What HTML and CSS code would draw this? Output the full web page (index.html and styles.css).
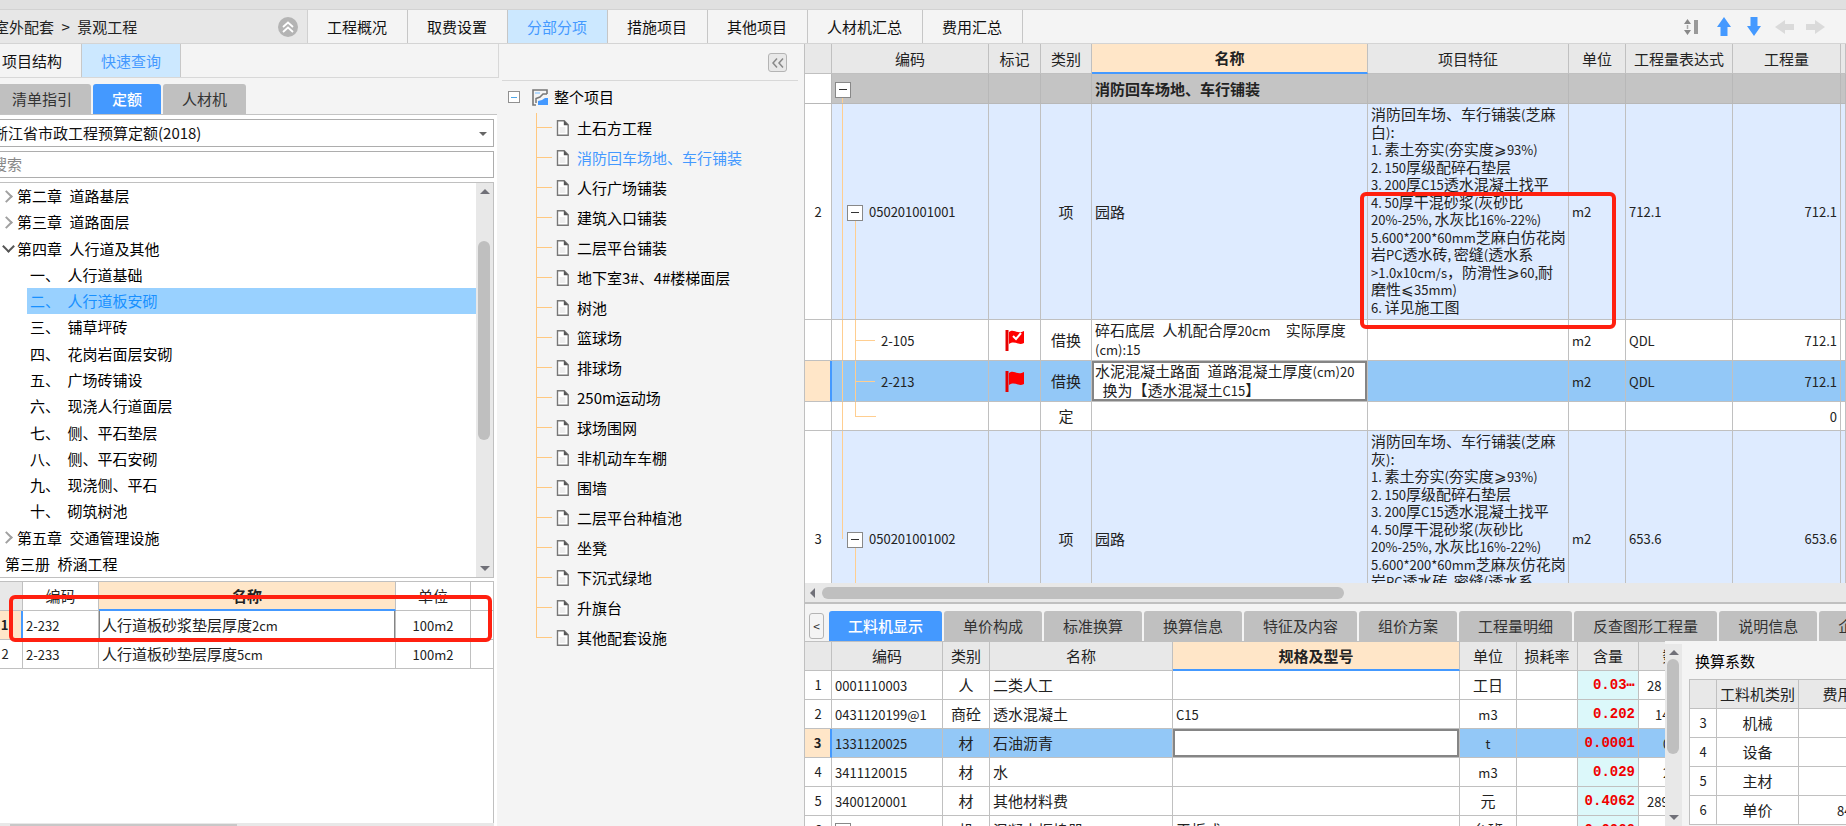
FILE: index.html
```html
<!DOCTYPE html>
<html lang="zh-CN">
<head>
<meta charset="utf-8">
<title>工程计价</title>
<link rel="stylesheet" href="styles.css">
</head>
<body>
<svg class="defs" aria-hidden="true">
  <symbol id="doc" viewBox="0 0 13 16"><path d="M1.5 .8h6.7l4 4v10.4H1.500z" fill="#fff" stroke="#777" stroke-width="1.4"/><path d="M7.800 0.500v4.800h4.700z" fill="#555"/><path d="M3.500 8h6M3.500 10h6M3.500 12h6" stroke="#ddd"/></symbol>
</svg>
<div class="app">
  <div class="strip"></div>
  <header class="topbar">
    <div class="crumb"><span>室外配套&ensp;&gt;&ensp;景观工程</span>
      <button class="round" aria-label="收起"><svg viewBox="0 0 20 20" width="20" height="20"><circle cx="10" cy="10" r="10" fill="#b4b4b4"/><path d="M5 10l5-4.500 5 4.500M5 15l5-4.500 5 4.500" fill="none" stroke="#fff" stroke-width="1.800"/></svg></button>
    </div>
    <nav class="maintabs">
      <button>工程概况</button><button>取费设置</button><button class="on">分部分项</button><button>措施项目</button><button>其他项目</button><button>人材机汇总</button><button>费用汇总</button>
    </nav>
    <div class="tools">
      <button aria-label="行高"><svg viewBox="0 0 14 16" width="14" height="16"><path d="M0 5l3.500-5L7 5zM0 11l3.500 5L7 11z" fill="#888"/><path d="M3.500 6v4" stroke="#aaa" stroke-width="1.500"/><path d="M10 1h4v14h-4z" fill="#999"/></svg></button>
      <button aria-label="上移"><svg viewBox="0 0 14 19" width="14" height="19"><path d="M7 0l7 10h-3.500v9h-7v-9H0z" fill="#4499ff"/></svg></button>
      <button aria-label="下移"><svg viewBox="0 0 14 19" width="14" height="19"><path d="M7 19l7-10h-3.500V0h-7v9H0z" fill="#4499ff"/></svg></button>
      <button aria-label="左移"><svg viewBox="0 0 19 14" width="19" height="14"><path d="M0 7l10-7v4h9v6h-9v4z" fill="#dadada"/></svg></button>
      <button aria-label="右移"><svg viewBox="0 0 19 14" width="19" height="14"><path d="M19 7L9 0v4H0v6h9v4z" fill="#dadada"/></svg></button>
    </div>
  </header>
  <div class="body">
    <aside class="left">
      <nav class="subtabs"><button>项目结构</button><button class="on">快速查询</button></nav>
      <nav class="pills first"><button>清单指引</button><button class="on">定额</button><button>人材机</button></nav>
      <div class="query">
        <div class="combo"><select aria-label="定额库"><option>浙江省市政工程预算定额(2018)</option></select></div>
        <input class="search" type="text" placeholder="搜索" aria-label="搜索">
        <div class="treebox">
          <ul class="chapters">
            <li class="c closed">第二章&ensp;道路基层</li>
            <li class="c closed">第三章&ensp;道路面层</li>
            <li class="c open">第四章&ensp;人行道及其他</li>
            <li class="s">一、&ensp;人行道基础</li>
            <li class="s sel">二、&ensp;人行道板安砌</li>
            <li class="s">三、&ensp;铺草坪砖</li>
            <li class="s">四、&ensp;花岗岩面层安砌</li>
            <li class="s">五、&ensp;广场砖铺设</li>
            <li class="s">六、&ensp;现浇人行道面层</li>
            <li class="s">七、&ensp;侧、平石垫层</li>
            <li class="s">八、&ensp;侧、平石安砌</li>
            <li class="s">九、&ensp;现浇侧、平石</li>
            <li class="s">十、&ensp;砌筑树池</li>
            <li class="c closed">第五章&ensp;交通管理设施</li>
            <li class="v">第三册&ensp;桥涵工程</li>
          </ul>
          <div class="vbar"><i class="up"></i><b class="t1"></b><i class="down"></i></div>
        </div>
        <div class="quota">
          <table class="grid qt">
            <colgroup><col class="w35"><col class="w76"><col><col class="w75"><col class="w22"></colgroup>
            <tr><th class="corner"></th><th>编码</th><th class="cur">名称</th><th>单位</th><th></th></tr>
            <tr><td class="no act">1</td><td><span class="n">2-232</span></td><td class="edit side">人行道板砂浆垫层厚度<span class="n">2cm</span></td><td class="mid"><span class="n">100m2</span></td><td></td></tr>
            <tr><td class="no">2</td><td><span class="n">2-233</span></td><td>人行道板砂垫层厚度<span class="n">5cm</span></td><td class="mid"><span class="n">100m2</span></td><td></td></tr>
          </table>
          <div class="mark m1"></div>
        </div>
        <div class="hslim"><b></b></div>
      </div>
    </aside>
    <section class="middle">
      <div class="mhead"><button class="fold" aria-label="收起"><svg viewBox="0 0 12 10" width="12" height="10"><path d="M5 .5L1 5l4 4.500M11 .5L7 5l4 4.500" fill="none" stroke="#888" stroke-width="1.500"/></svg></button></div>
      <div class="root"><button class="ex" aria-label="折叠"></button><svg viewBox="0 0 16 17" width="16" height="17"><path d="M15 5V1H1v15h3" fill="none" stroke="#777" stroke-width="1.600"/><path d="M3 4h5" stroke="#9fd0ff" stroke-width="1.500"/><path d="M4 14V9.500l4-1.500 3-3h4" fill="none" stroke="#777" stroke-width="1.500"/><path d="M6 16v-4l4-1 3-2h3v7z" fill="#4499ff"/></svg><span>整个项目</span></div>
      <ul class="parts">
        <li><svg><use href="#doc"/></svg>土石方工程</li>
        <li class="sel"><svg><use href="#doc"/></svg>消防回车场地、车行铺装</li>
        <li><svg><use href="#doc"/></svg>人行广场铺装</li>
        <li><svg><use href="#doc"/></svg>建筑入口铺装</li>
        <li><svg><use href="#doc"/></svg>二层平台铺装</li>
        <li><svg><use href="#doc"/></svg>地下室3#、4#楼梯面层</li>
        <li><svg><use href="#doc"/></svg>树池</li>
        <li><svg><use href="#doc"/></svg>篮球场</li>
        <li><svg><use href="#doc"/></svg>排球场</li>
        <li><svg><use href="#doc"/></svg>250m运动场</li>
        <li><svg><use href="#doc"/></svg>球场围网</li>
        <li><svg><use href="#doc"/></svg>非机动车车棚</li>
        <li><svg><use href="#doc"/></svg>围墙</li>
        <li><svg><use href="#doc"/></svg>二层平台种植池</li>
        <li><svg><use href="#doc"/></svg>坐凳</li>
        <li><svg><use href="#doc"/></svg>下沉式绿地</li>
        <li><svg><use href="#doc"/></svg>升旗台</li>
        <li><svg><use href="#doc"/></svg>其他配套设施</li>
      </ul>
    </section>
    <main class="right">
      <div class="bill">
        <table class="grid main">
          <colgroup><col class="w27"><col class="w157"><col class="w52"><col class="w51"><col><col class="w201"><col class="w57"><col class="w107"><col class="w108"><col class="w5"></colgroup>
          <tr class="h30"><th></th><th>编码</th><th>标记</th><th>类别</th><th class="cur">名称</th><th>项目特征</th><th>单位</th><th>工程量表达式</th><th>工程量</th><th></th></tr>
          <tr class="h30 group"><td class="no"></td><td class="tr g"><button class="box" aria-label="折叠"></button></td><td></td><td></td><td>消防回车场地、车行铺装</td><td></td><td></td><td></td><td></td><td></td></tr>
          <tr class="h216 item"><td class="no">2</td><td class="tr a"><button class="box" aria-label="折叠"></button><span class="n">050201001001</span></td><td></td><td class="mid">项</td><td>园路</td>
            <td class="top"><div class="spec"><span>消防回车场、车行铺装<i>(</i>芝麻</span><span>白<i>)</i>:</span><span><i>1.&thinsp;</i>素土夯实<i>(</i>夯实度⩾<i>93%)</i></span><span><i>2.&thinsp;150</i>厚级配碎石垫层</span><span><i>3.&thinsp;200</i>厚<i>C15</i>透水混凝土找平</span><span><i>4.&thinsp;50</i>厚干混砂浆<i>(</i>灰砂比</span><span><i>20%-25%,&thinsp;</i>水灰比<i>16%-22%)</i></span><span><i>5.600*200*60mm</i>芝麻白仿花岗</span><span>岩<i>PC</i>透水砖<i>,&thinsp;</i>密缝<i>(</i>透水系</span><span><i>&gt;1.0x10cm/s</i>，防滑性⩾<i>60,</i>耐</span><span>磨性⩽<i>35mm)</i></span><span><i>6.&thinsp;</i>详见施工图</span></div></td>
            <td><span class="n">m2</span></td><td><span class="n">712.1</span></td><td class="num"><span class="n">712.1</span></td><td></td></tr>
          <tr class="h41"><td class="no"></td><td class="tr k"><span class="n">2-105</span></td><td class="mid"><svg class="flag" viewBox="0 0 20 22"><path d="M2 1v21" stroke="#e60000" stroke-width="3"/><path d="M4 3c5-4 8 3 15-1v12c-6 3-9-3-15 1z" fill="#f00"/><path d="M8 7l3 3 5-6" fill="none" stroke="#fff" stroke-width="2"/></svg></td><td class="mid">借换</td><td class="wrap">碎石底层&ensp;人机配合厚<span class="n">20cm</span>&emsp;实际厚度<br><span class="n">(cm):15</span></td><td></td><td><span class="n">m2</span></td><td><span class="n">QDL</span></td><td class="num"><span class="n">712.1</span></td><td></td></tr>
          <tr class="h41 sel"><td class="no act"></td><td class="tr k"><span class="n">2-213</span></td><td class="mid"><svg class="flag" viewBox="0 0 20 22"><path d="M2 1v21" stroke="#e60000" stroke-width="3"/><path d="M4 3c5-4 8 3 15-1v12c-6 3-9-3-15 1z" fill="#f00"/></svg></td><td class="mid">借换</td><td class="wrap edit">水泥混凝土路面&ensp;道路混凝土厚度<span class="n">(cm)20</span><br>&ensp;换为【透水混凝土<span class="n">C15</span>】</td><td></td><td><span class="n">m2</span></td><td><span class="n">QDL</span></td><td class="num"><span class="n">712.1</span></td><td></td></tr>
          <tr class="h29"><td class="no"></td><td class="tr k z"></td><td></td><td class="mid">定</td><td></td><td></td><td></td><td></td><td class="num"><span class="n">0</span></td><td></td></tr>
          <tr class="h216 item"><td class="no">3</td><td class="tr a z"><button class="box" aria-label="折叠"></button><span class="n">050201001002</span></td><td></td><td class="mid">项</td><td>园路</td>
            <td class="top"><div class="spec"><span>消防回车场、车行铺装<i>(</i>芝麻</span><span>灰<i>)</i>:</span><span><i>1.&thinsp;</i>素土夯实<i>(</i>夯实度⩾<i>93%)</i></span><span><i>2.&thinsp;150</i>厚级配碎石垫层</span><span><i>3.&thinsp;200</i>厚<i>C15</i>透水混凝土找平</span><span><i>4.&thinsp;50</i>厚干混砂浆<i>(</i>灰砂比</span><span><i>20%-25%,&thinsp;</i>水灰比<i>16%-22%)</i></span><span><i>5.600*200*60mm</i>芝麻灰仿花岗</span><span>岩<i>PC</i>透水砖<i>,&thinsp;</i>密缝<i>(</i>透水系</span></div></td>
            <td><span class="n">m2</span></td><td><span class="n">653.6</span></td><td class="num"><span class="n">653.6</span></td><td></td></tr>
        </table>
        <div class="mark m2"></div>
      </div>
      <div class="hbar"><i></i><b></b></div>
      <nav class="pills low"><button class="prev" aria-label="向左">&lt;</button><button class="on">工料机显示</button><button>单价构成</button><button>标准换算</button><button>换算信息</button><button>特征及内容</button><button>组价方案</button><button>工程量明细</button><button>反查图形工程量</button><button>说明信息</button><button>企业定额</button></nav>
      <div class="detail">
        <div class="labour">
          <table class="grid lt">
            <colgroup><col class="w27"><col class="w111"><col class="w47"><col class="w183"><col><col class="w57"><col class="w61"><col class="w61"><col class="w78"></colgroup>
            <tr><th></th><th>编码</th><th>类别</th><th>名称</th><th class="cur">规格及型号</th><th>单位</th><th>损耗率</th><th>含量</th><th>数量</th></tr>
            <tr><td class="no">1</td><td><span class="n">0001110003</span></td><td class="mid">人</td><td>二类人工</td><td></td><td class="mid">工日</td><td></td><td class="qty">0.03⋯</td><td class="far"><span class="n">28</span></td></tr>
            <tr><td class="no">2</td><td><span class="n">0431120199@1</span></td><td class="mid">商砼</td><td>透水混凝土</td><td><span class="n">C15</span></td><td class="mid"><span class="n">m3</span></td><td></td><td class="qty">0.202</td><td class="far p2"><span class="n">14</span></td></tr>
            <tr class="sel"><td class="no act">3</td><td><span class="n">1331120025</span></td><td class="mid">材</td><td>石油沥青</td><td class="edit"></td><td class="mid"><span class="n">t</span></td><td></td><td class="qty">0.0001</td><td class="far p3"><span class="n">0</span></td></tr>
            <tr><td class="no">4</td><td><span class="n">3411120015</span></td><td class="mid">材</td><td>水</td><td></td><td class="mid"><span class="n">m3</span></td><td></td><td class="qty">0.029</td><td class="far p3"><span class="n">2</span></td></tr>
            <tr><td class="no">5</td><td><span class="n">3400120001</span></td><td class="mid">材</td><td>其他材料费</td><td></td><td class="mid">元</td><td></td><td class="qty">0.4062</td><td class="far"><span class="n">289</span></td></tr>
            <tr><td class="no">6</td><td><button class="box plus" aria-label="展开"></button> <span class="n">9975964</span></td><td class="mid">机</td><td>混凝土振捣器</td><td>平板式</td><td class="mid">台班</td><td></td><td class="qty">0.0066</td><td></td></tr>
          </table>
        </div>
        <div class="vbar lower"><i class="up"></i><b class="t2"></b><i class="down"></i></div>
        <div class="coef">
          <h2>换算系数</h2>
          <table class="grid ct">
            <colgroup><col class="w27"><col class="w82"><col class="w108"></colgroup>
            <tr><th></th><th>工料机类别</th><th>费用系数</th></tr>
            <tr><td class="no">3</td><td class="mid">机械</td><td></td></tr>
            <tr><td class="no">4</td><td class="mid">设备</td><td></td></tr>
            <tr><td class="no">5</td><td class="mid">主材</td><td></td></tr>
            <tr><td class="no">6</td><td class="mid">单价</td><td class="fee"><span class="n">84</span></td></tr>
          </table>
        </div>
      </div>
    </main>
  </div>
</div>
</body>
</html>
```
FILE: styles.css
```css
* { box-sizing: border-box; }
html, body { height: 100%; }
body { margin: 0; overflow: hidden; background: #f4f4f4; color: #222; font: 15px/18px "Noto Sans CJK SC", "Noto Sans", sans-serif; }
button, input, select { font: inherit; color: inherit; margin: 0; padding: 0; border: 0; background: none; border-radius: 0; }
ul { list-style: none; margin: 0; padding: 0; }
.defs { display: none; }
.n, .spec i { font-size: 13px; font-style: normal; }
.app { display: flex; flex-direction: column; height: 100vh; }
.strip { flex: none; height: 10px; background: #e0e0e0; border-bottom: 1px solid #d2d2d2; }

/* top bar */
.topbar { flex: none; display: flex; height: 34px; border-bottom: 1px solid #d4d4d4; white-space: nowrap; }
.crumb { flex: none; width: 308px; display: flex; align-items: center; justify-content: space-between; padding-right: 9px; background: #e7e7e7; border-right: 1px solid #d0d0d0; }
.crumb span { margin-left: -6px; }
.round { height: 20px; width: 20px; display: flex; }
.maintabs { display: flex; }
.maintabs button { padding: 0 20px 0 19px; border-right: 1px solid #c6c6c6; color: #111; }
.maintabs .on { background: #cce8ff; color: #4499ff; }
.tools { margin-left: auto; display: flex; align-items: center; gap: 12px; padding-right: 21px; }
.tools button { display: flex; justify-content: center; min-width: 18px; }
.tools button:first-child { margin-right: 3px; }

.body { flex: 1; min-height: 0; display: flex; }
.left { flex: none; width: 499px; display: flex; flex-direction: column; overflow: hidden; }
.subtabs { flex: none; height: 34px; display: flex; border: 1px solid #d8d8d8; border-top: 0; border-left: 0; margin-left: -17px; color: #111; }
.subtabs button { padding: 0 19px; border-right: 1px solid #c8c8c8; }
.subtabs .on { background: #cce8ff; color: #4499ff; }
.pills { flex: none; display: flex; gap: 2px; height: 30px; white-space: nowrap; }
.pills button { padding: 0 19px; background: #c0c0c0; border-radius: 3px 3px 0 0; color: #333; }
.pills .on { background: #4499ff; color: #fff; font-weight: 500; }
.pills.first { margin: 6px 0 0 -7px; }
.query { flex: 1; min-height: 0; display: flex; flex-direction: column; margin-right: 2px; padding-right: 3px; background: #fff; border-top: 1px solid #c4c4c4; }
.combo { position: relative; flex: none; height: 28px; margin: 4px 0 4px -12px; border: 1px solid #adadad; }
.combo::after { content: ""; position: absolute; right: 6px; top: 12px; border: 4px solid transparent; border-top-color: #666; pointer-events: none; }
.combo select { width: 100%; height: 100%; appearance: none; padding-left: 4px; color: #111; }
.search { flex: none; height: 27px; margin-left: -12px; padding: 0 0 2px 3px; border: 1px solid #adadad; }
.search::placeholder { color: #888; opacity: 1; }
.treebox { flex: none; height: 396px; margin-top: 4px; display: flex; border: 1px solid #c0c0c0; border-left: 0; }
.chapters { flex: 1; display: grid; grid-auto-rows: 1fr; color: #000; }
.chapters li { position: relative; display: flex; align-items: center; }
.c { padding-left: 17px; }
.v { padding-left: 5px; }
.s { padding-left: 3px; margin-left: 27px; }
.chapters .sel { background: #99d1ff; color: #1890ff; }
.c::before { content: ""; position: absolute; left: 2px; top: 9px; width: 7px; height: 7px; border: solid #a0a0a0; border-width: 2px 2px 0 0; transform: rotate(45deg); }
.open::before { left: 4px; top: 6px; border-color: #555; transform: rotate(135deg); }
.vbar { flex: none; width: 17px; position: relative; background: #e8e8e8; }
.vbar i { position: absolute; left: 4px; border: 5px solid transparent; }
.vbar .up { top: 1px; border-bottom-color: #707078; }
.vbar .down { bottom: 1px; border-top-color: #707078; }
.vbar b { position: absolute; left: 2px; right: 3px; border-radius: 6px; background: #bfbfbf; }
.t1 { top: 58px; height: 199px; }
.t2 { top: 15px; height: 95px; }

/* grids */
.grid { table-layout: fixed; border-collapse: separate; border-spacing: 0; width: 100%; }
.grid th, .grid td { height: 29px; padding: 0 3px; border: solid #c0c0c0; border-width: 0 1px 1px 0; text-align: left; vertical-align: middle; white-space: nowrap; overflow: hidden; }
.grid td { background: #fff; }
.grid th { padding: 0; background: #e8e8e8; font-weight: 400; text-align: center; }
.grid th.cur { background: #ffe6c8; font-weight: 700; border-bottom: 2px solid #4499ff; }
.grid .mid { text-align: center; }
.grid .num { text-align: right; }
.grid .no { padding: 0; text-align: center; font-size: 13px; }
.grid .act { background: #ffe6c8; border-right: 2px solid #4499ff; font-weight: 700; }
.grid .sel td { background: #93c8f7; }
.grid .sel .act { background: #ffe6c8; }
.grid td.edit, .grid .sel td.edit { background: #fff; box-shadow: inset 0 0 0 2px #858585; }
.grid td.side { box-shadow: inset 1px 0 #858585, inset -1px 0 #858585; }
.grid .h30 th, .grid .h30 td { height: 30px; }
.grid .h41 td { height: 41px; }
.grid .h216 td { height: 216px; }
.w5 { width: 5px; } .w22 { width: 22px; } .w27 { width: 27px; } .w35 { width: 35px; } .w47 { width: 47px; }
.w51 { width: 51px; } .w52 { width: 52px; } .w57 { width: 57px; } .w61 { width: 61px; } .w75 { width: 75px; }
.w76 { width: 76px; } .w78 { width: 78px; } .w82 { width: 82px; } .w107 { width: 107px; } .w108 { width: 108px; }
.w111 { width: 111px; } .w157 { width: 157px; } .w183 { width: 183px; } .w201 { width: 201px; }

.quota { position: relative; flex: 1; min-height: 0; margin-top: 3px; border: 1px solid #c0c0c0; border-width: 1px 1px 0 0; }
.qt { margin-left: -12px; width: calc(100% + 12px); }
.qt th { background: #fff; }
.qt th.corner { background: #e8e8e8; }
.qt th:last-child, .qt td:last-child { border-right: 0; }
.mark { position: absolute; border: 4px solid #ff2010; border-radius: 6px; }
.m1 { left: 9px; right: 1px; top: 13px; height: 47px; }
.m2 { right: 230px; top: 148px; width: 256px; height: 137px; }
.hslim { flex: none; height: 3px; background: #e8e8e8; padding: 1px 0 0 10px; }
.hslim b { display: block; width: 227px; height: 2px; background: #c8c8c8; }

/* project tree */
.middle { flex: none; width: 305px; color: #000; }
.mhead { height: 37px; margin: 0 6px 0 3px; padding: 9px 11px 0 0; border-bottom: 1px solid #d8d8d8; display: flex; justify-content: flex-end; }
.fold { width: 19px; height: 19px; display: flex; align-items: center; justify-content: center; border: 1px solid #b4b4b4; border-radius: 3px; background: #e8e8e8; }
.root { height: 32px; display: flex; align-items: center; padding-left: 9px; }
.root svg { margin: 0 6px 0 12px; }
.ex { width: 12px; height: 12px; border: 1px solid #909090; background: linear-gradient(#4da6e8, #4da6e8) center / 6px 1px no-repeat #fff; }
.parts { margin-left: 37px; }
.parts li { position: relative; height: 30px; display: flex; align-items: center; gap: 8px; padding-left: 20px; }
.parts svg { width: 13px; height: 16px; }
.parts .sel { color: #4499ff; }
.parts li::before { content: ""; position: absolute; left: 0; top: 0; bottom: 0; border-left: 1px solid #ffc880; }
.parts li::after { content: ""; position: absolute; left: 0; top: 14px; width: 16px; border-top: 1px solid #ffc880; }
.parts li:last-child::before { bottom: 15px; }

/* bill of quantities */
.right { flex: 1; min-width: 0; display: flex; flex-direction: column; border-left: 1px solid #c0c0c0; }
.bill { position: relative; flex: 1; min-height: 0; overflow: hidden; background: #fff; }
.grid .group td { background: #c4c4c4; border-color: #b8b8b8; font-weight: 700; }
.grid .group .no { background: #fff; }
.grid .item td { background: #deebff; }
.grid .item .no { background: #fff; }
.grid td.top { vertical-align: top; padding-top: 1px; }
.grid td.wrap { line-height: 18px; }
.spec { display: grid; grid-template-rows: repeat(12, minmax(0, 1fr)); height: 210px; line-height: 17px; }
.spec i { line-height: 1; }
.flag { display: block; width: 20px; height: 22px; margin: auto; }
.box { width: 16px; height: 16px; border: 1px solid #888; background: linear-gradient(#333, #333) center / 8px 1px no-repeat #fff; vertical-align: middle; }
.plus { background: linear-gradient(#333, #333) center / 8px 1px no-repeat, linear-gradient(#333, #333) center / 1px 8px no-repeat #fff; }
.grid td.tr { position: relative; }
.tr::before, .tr::after { content: ""; position: absolute; top: 0; bottom: 0; left: 10px; width: 1px; background: #ffce90; }
.tr .box { position: relative; z-index: 1; }
.g::before { top: 22px; }
.g::after { display: none; }
.grid td.a { padding-left: 15px; }
.a .n { margin-left: 6px; }
.a::after { left: 23px; top: 50%; }
.a.z::before { bottom: 50%; }
.grid td.k { padding-left: 49px; }
.k::before { box-shadow: 13px 0 #ffce90; }
.k::after { left: 23px; top: 50%; bottom: auto; width: 20px; height: 1px; }
.k.z::before { box-shadow: none; }
.k.z::after { top: 0; height: 50%; background: none; border: solid #ffce90; border-width: 0 0 1px 1px; }

.hbar { flex: none; height: 21px; position: relative; background: #e8e8e8; border-bottom: 2px solid #c0c0c0; }
.hbar i { position: absolute; left: 0; top: 5px; border: 5px solid transparent; border-right-color: #707078; }
.hbar b { position: absolute; left: 17px; right: 502px; top: 4px; height: 12px; border-radius: 6px; background: #bfbfbf; }
.pills.low { margin-top: 7px; padding-left: 4px; overflow: hidden; }
.low button { flex: none; }
.low .prev { width: 15px; height: 26px; margin: 2px 3px 0 0; padding: 0; border: 1px solid #b4b4b4; border-radius: 3px; background: #f4f4f4; font-size: 12px; }
.detail { flex: none; height: 185px; display: flex; overflow: hidden; }
.labour { flex: 1; min-width: 0; overflow: hidden; border-top: 1px solid #c0c0c0; }
.lt { width: calc(100% + 52px); }
.grid td.qty { background: #dcf8fa; color: #f00000; text-align: right; font: 700 14px/18px "Liberation Mono", monospace; }
.grid .sel td.qty { background: #93c8f7; }
.grid td.far { padding-left: 8px; }
.grid td.p2 { padding-left: 16px; }
.grid td.p3 { padding-left: 24px; }
.lower { margin-top: 3px; }
.coef { flex: none; width: 164px; padding-left: 7px; overflow: hidden; }
.coef h2 { margin: 0; height: 38px; padding: 11px 0 0 6px; font: inherit; color: #000; }
.ct { width: 217px; border: solid #c0c0c0; border-width: 1px 0 0 1px; }
.grid td.fee { padding-left: 38px; }
```
